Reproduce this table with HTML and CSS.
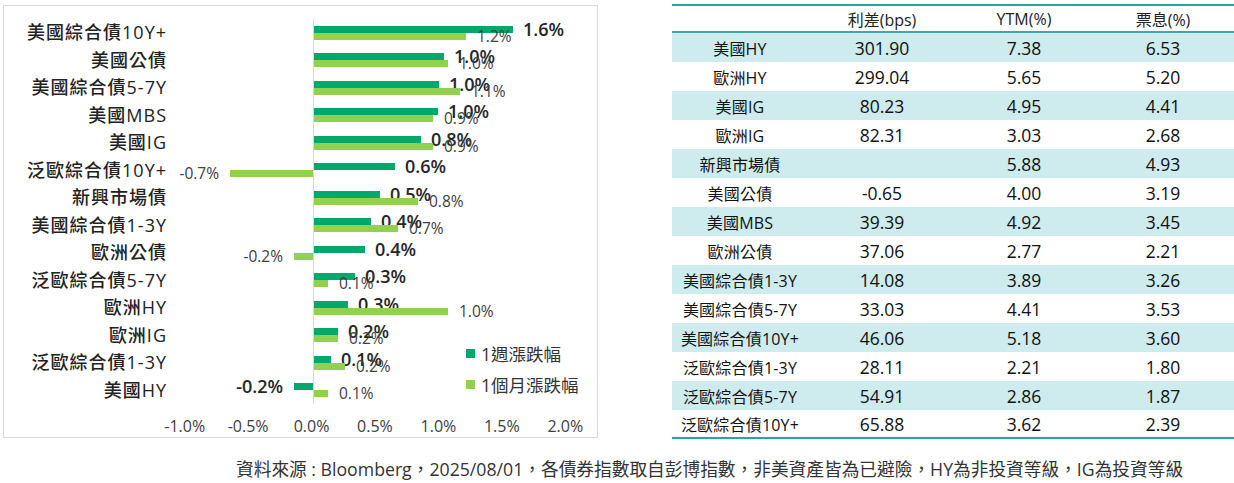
FILE: index.html
```html
<!DOCTYPE html>
<html lang="zh-Hant">
<head>
<meta charset="utf-8">
<title>債券指數表現</title>
<link rel="stylesheet" href="styles.css">
</head>
<body>
<div class="page">
  <div class="top">
    <div class="chart">
      <div class="plot-wrap">
        <div class="cats">
          <div class="cat">美國綜合債10Y+</div>
          <div class="cat">美國公債</div>
          <div class="cat">美國綜合債5-7Y</div>
          <div class="cat">美國MBS</div>
          <div class="cat">美國IG</div>
          <div class="cat">泛歐綜合債10Y+</div>
          <div class="cat">新興市場債</div>
          <div class="cat">美國綜合債1-3Y</div>
          <div class="cat">歐洲公債</div>
          <div class="cat">泛歐綜合債5-7Y</div>
          <div class="cat">歐洲HY</div>
          <div class="cat">歐洲IG</div>
          <div class="cat">泛歐綜合債1-3Y</div>
          <div class="cat">美國HY</div>
        </div>
        <div class="plot">
          <div class="row">
            <div class="line pos"><span class="bar dark" style="width:199px"></span><span class="lbl dark-lbl">1.6%</span></div>
            <div class="line pos"><span class="bar light" style="width:152px"></span><span class="lbl light-lbl">1.2%</span></div>
          </div>
          <div class="row">
            <div class="line pos"><span class="bar dark" style="width:130px"></span><span class="lbl dark-lbl">1.0%</span></div>
            <div class="line pos"><span class="bar light" style="width:134px"></span><span class="lbl light-lbl">1.0%</span></div>
          </div>
          <div class="row">
            <div class="line pos"><span class="bar dark" style="width:125px"></span><span class="lbl dark-lbl">1.0%</span></div>
            <div class="line pos"><span class="bar light" style="width:146px"></span><span class="lbl light-lbl">1.1%</span></div>
          </div>
          <div class="row">
            <div class="line pos"><span class="bar dark" style="width:124px"></span><span class="lbl dark-lbl">1.0%</span></div>
            <div class="line pos"><span class="bar light" style="width:119px"></span><span class="lbl light-lbl">0.9%</span></div>
          </div>
          <div class="row">
            <div class="line pos"><span class="bar dark" style="width:107px"></span><span class="lbl dark-lbl">0.8%</span></div>
            <div class="line pos"><span class="bar light" style="width:119px"></span><span class="lbl light-lbl">0.9%</span></div>
          </div>
          <div class="row">
            <div class="line pos"><span class="bar dark" style="width:81px"></span><span class="lbl dark-lbl">0.6%</span></div>
            <div class="line neg"><span class="lbl light-lbl">-0.7%</span><span class="bar light" style="width:83px"></span></div>
          </div>
          <div class="row">
            <div class="line pos"><span class="bar dark" style="width:66px"></span><span class="lbl dark-lbl">0.5%</span></div>
            <div class="line pos"><span class="bar light" style="width:104px"></span><span class="lbl light-lbl">0.8%</span></div>
          </div>
          <div class="row">
            <div class="line pos"><span class="bar dark" style="width:57px"></span><span class="lbl dark-lbl">0.4%</span></div>
            <div class="line pos"><span class="bar light" style="width:84px"></span><span class="lbl light-lbl">0.7%</span></div>
          </div>
          <div class="row">
            <div class="line pos"><span class="bar dark" style="width:51px"></span><span class="lbl dark-lbl">0.4%</span></div>
            <div class="line neg"><span class="lbl light-lbl">-0.2%</span><span class="bar light" style="width:19px"></span></div>
          </div>
          <div class="row">
            <div class="line pos"><span class="bar dark" style="width:41px"></span><span class="lbl dark-lbl">0.3%</span></div>
            <div class="line pos"><span class="bar light" style="width:14px"></span><span class="lbl light-lbl">0.1%</span></div>
          </div>
          <div class="row">
            <div class="line pos"><span class="bar dark" style="width:34px"></span><span class="lbl dark-lbl">0.3%</span></div>
            <div class="line pos"><span class="bar light" style="width:134px"></span><span class="lbl light-lbl">1.0%</span></div>
          </div>
          <div class="row">
            <div class="line pos"><span class="bar dark" style="width:24px"></span><span class="lbl dark-lbl">0.2%</span></div>
            <div class="line pos"><span class="bar light" style="width:24px"></span><span class="lbl light-lbl">0.2%</span></div>
          </div>
          <div class="row">
            <div class="line pos"><span class="bar dark" style="width:17px"></span><span class="lbl dark-lbl">0.1%</span></div>
            <div class="line pos"><span class="bar light" style="width:31px"></span><span class="lbl light-lbl">0.2%</span></div>
          </div>
          <div class="row">
            <div class="line neg"><span class="lbl dark-lbl">-0.2%</span><span class="bar dark" style="width:19px"></span></div>
            <div class="line pos"><span class="bar light" style="width:14px"></span><span class="lbl light-lbl">0.1%</span></div>
          </div>
        </div>
      </div>
      <div class="axis">
        <span class="tick">-1.0%</span>
        <span class="tick">-0.5%</span>
        <span class="tick">0.0%</span>
        <span class="tick">0.5%</span>
        <span class="tick">1.0%</span>
        <span class="tick">1.5%</span>
        <span class="tick">2.0%</span>
      </div>
      <div class="legend">
        <div class="legend-item"><span class="swatch dark"></span>1週漲跌幅</div>
        <div class="legend-item"><span class="swatch light"></span>1個月漲跌幅</div>
      </div>
    </div>

    <div class="table">
      <div class="tr head">
        <div class="td"></div>
        <div class="td">利差(bps)</div>
        <div class="td">YTM(%)</div>
        <div class="td">票息(%)</div>
      </div>
      <div class="tr shade"><div class="td name">美國HY</div><div class="td num">301.90</div><div class="td num">7.38</div><div class="td num">6.53</div></div>
      <div class="tr"><div class="td name">歐洲HY</div><div class="td num">299.04</div><div class="td num">5.65</div><div class="td num">5.20</div></div>
      <div class="tr shade"><div class="td name">美國IG</div><div class="td num">80.23</div><div class="td num">4.95</div><div class="td num">4.41</div></div>
      <div class="tr"><div class="td name">歐洲IG</div><div class="td num">82.31</div><div class="td num">3.03</div><div class="td num">2.68</div></div>
      <div class="tr shade"><div class="td name">新興市場債</div><div class="td num"></div><div class="td num">5.88</div><div class="td num">4.93</div></div>
      <div class="tr"><div class="td name">美國公債</div><div class="td num">-0.65</div><div class="td num">4.00</div><div class="td num">3.19</div></div>
      <div class="tr shade"><div class="td name">美國MBS</div><div class="td num">39.39</div><div class="td num">4.92</div><div class="td num">3.45</div></div>
      <div class="tr"><div class="td name">歐洲公債</div><div class="td num">37.06</div><div class="td num">2.77</div><div class="td num">2.21</div></div>
      <div class="tr shade"><div class="td name">美國綜合債1-3Y</div><div class="td num">14.08</div><div class="td num">3.89</div><div class="td num">3.26</div></div>
      <div class="tr"><div class="td name">美國綜合債5-7Y</div><div class="td num">33.03</div><div class="td num">4.41</div><div class="td num">3.53</div></div>
      <div class="tr shade"><div class="td name">美國綜合債10Y+</div><div class="td num">46.06</div><div class="td num">5.18</div><div class="td num">3.60</div></div>
      <div class="tr"><div class="td name">泛歐綜合債1-3Y</div><div class="td num">28.11</div><div class="td num">2.21</div><div class="td num">1.80</div></div>
      <div class="tr shade"><div class="td name">泛歐綜合債5-7Y</div><div class="td num">54.91</div><div class="td num">2.86</div><div class="td num">1.87</div></div>
      <div class="tr last"><div class="td name">泛歐綜合債10Y+</div><div class="td num">65.88</div><div class="td num">3.62</div><div class="td num">2.39</div></div>
    </div>
  </div>
  <p class="note">資料來源 : Bloomberg，2025/08/01，各債券指數取自彭博指數，非美資產皆為已避險，HY為非投資等級，IG為投資等級</p>
</div>
</body>
</html>
```

FILE: styles.css
```css
* { box-sizing: border-box; }

html, body {
  margin: 0;
  padding: 0;
  background: #ffffff;
}

body {
  font-family: "Open Sans", "Noto Sans CJK TC", sans-serif;
  color: #222222;
  width: 1234px;
  height: 483px;
  overflow: hidden;
}

.top {
  display: flex;
  align-items: flex-start;
}

/* ---------- chart ---------- */
.chart {
  position: relative;
  margin: 5px 0 0 3px;
  width: 595px;
  height: 433px;
  border: 1px solid #d9d9d9;
  padding-top: 13px;
}

.plot-wrap {
  display: flex;
}

.cats {
  width: 163px;
  flex: none;
}

.cat {
  height: 27.5px;
  line-height: 27.5px;
  text-align: right;
  font-size: 18px;
  font-weight: 500;
  letter-spacing: 1px;
  color: #222222;
  white-space: nowrap;
}

.plot {
  position: relative;
  margin-left: 18px;
  width: 384px;
}

.plot::before {
  content: "";
  position: absolute;
  left: 128px;
  top: 0;
  bottom: 0;
  width: 1px;
  background: #d9d9d9;
}

.row {
  height: 27.5px;
  padding-top: 6.75px;
}

.line {
  display: flex;
  align-items: center;
  height: 7px;
}

.line.pos {
  padding-left: 129px;
}

.line.neg {
  width: 128px;
  justify-content: flex-end;
}

.bar {
  display: block;
  height: 7px;
  flex: none;
}

.dark { background: #00a86b; }
.light { background: #92d050; }

.lbl {
  white-space: nowrap;
  line-height: 7px;
  flex: none;
}

.dark-lbl {
  font-size: 18px;
  font-weight: 600;
  color: #262626;
  margin-left: 10px;
}

.light-lbl {
  font-size: 15.5px;
  color: #404040;
  margin-left: 11px;
}

.neg .lbl {
  margin-left: 0;
  margin-right: 11px;
}

.axis {
  display: flex;
  margin-top: 12px;
  margin-left: 149px;
}

.tick {
  width: 64px;
  text-align: center;
  font-size: 16px;
  line-height: 20px;
  color: #404040;
}

.legend {
  position: absolute;
  left: 462px;
  top: 332px;
}

.legend-item {
  display: flex;
  align-items: center;
  height: 31px;
  font-size: 17.5px;
  color: #333333;
  white-space: nowrap;
}

.swatch {
  width: 9px;
  height: 9px;
  margin-right: 6px;
}

/* ---------- table ---------- */
.table {
  margin: 4px 0 0 74px;
  width: 562px;
}

.tr {
  display: grid;
  grid-template-columns: 136px 148px 136px 142px;
  height: 29px;
  align-items: center;
}

.tr.head {
  border-top: 2px solid #22a7a3;
  border-bottom: 2px solid #3aa9ab;
}

.tr.shade {
  background: #ceebed;
}

.tr.last {
  border-bottom: 2px solid #22a7a3;
}

.td {
  text-align: center;
  white-space: nowrap;
  color: #111111;
}

.head .td {
  font-size: 16px;
  color: #222222;
}

.td.name {
  font-size: 16px;
  letter-spacing: 0.2px;
}

.td.num {
  font-size: 17.5px;
}

/* ---------- note ---------- */
.note {
  margin: 18px 0 0 236px;
  font-size: 17.7px;
  line-height: 24px;
  color: #333333;
  white-space: nowrap;
}
```
